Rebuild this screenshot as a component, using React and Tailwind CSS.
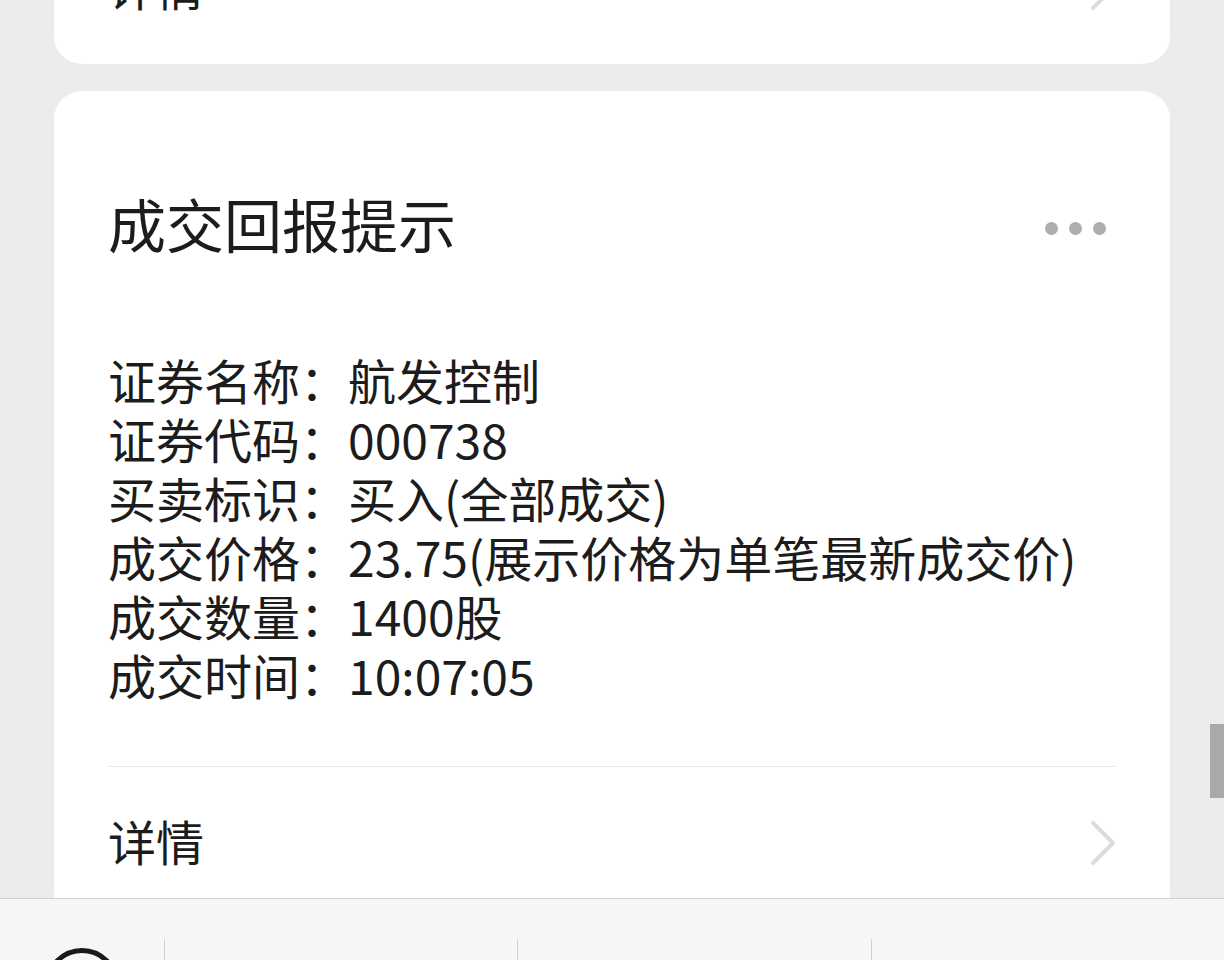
import React from 'react';

const rows = [
    ['证券名称：', '航发控制'],
    ['证券代码：', '000738'],
    ['买卖标识：', '买入(全部成交)'],
    ['成交价格：', '23.75(展示价格为单笔最新成交价)'],
    ['成交数量：', '1400股'],
    ['成交时间：', '10:07:05'],
];

const Chevron = () => (
    <svg width="26" height="46" viewBox="0 0 26 46" fill="none">
        <path d="M3 3 L23 23 L3 43" stroke="#dcdcdc" strokeWidth="4" strokeLinecap="round" strokeLinejoin="round" />
    </svg>
);

const DetailRow = ({ textClass = '' }) => (
    <div className="flex items-center justify-between h-[152px]">
        <span className={`text-[48px] leading-none text-[#1c1c1c] ${textClass}`}>详情</span>
        <Chevron />
    </div>
);

const App = () => {
    return (
        <div
            className="relative flex flex-col h-[960px] w-[1224px] overflow-hidden bg-[#ececec]"
            style={{ fontFamily: '"Noto Sans CJK SC", "Noto Sans", sans-serif' }}
        >
            {/* 消息列表 */}
            <div className="flex-1 min-h-0 overflow-hidden">
                {/* 上一条卡片（只露出底部） */}
                <div className="mx-[54px] mt-[-88px] bg-white rounded-[28px] px-[54px]">
                    <DetailRow textClass="-translate-y-[3px]" />
                </div>

                {/* 成交回报卡片 */}
                <div className="mx-[54px] mt-[27px] bg-white rounded-[28px] px-[54px] pt-[92px]">
                    <div className="flex items-center justify-between h-[80px]">
                        <h2 className="text-[58px] leading-none font-normal text-[#1c1c1c]">成交回报提示</h2>
                        <div className="flex items-center gap-[11px] mr-[10px] translate-y-[5px]">
                            <span className="w-[13px] h-[13px] rounded-full bg-[#adadad]" />
                            <span className="w-[13px] h-[13px] rounded-full bg-[#adadad]" />
                            <span className="w-[13px] h-[13px] rounded-full bg-[#adadad]" />
                        </div>
                    </div>

                    <div className="mt-[87px] pb-[62px] border-b border-[#e6e6e6]">
                        {rows.map(([label, value]) => (
                            <div key={label} className="flex text-[48px] leading-[59px] text-[#1c1c1c] whitespace-nowrap">
                                <span>{label}</span>
                                <span>{value}</span>
                            </div>
                        ))}
                    </div>

                    <DetailRow textClass="-translate-y-[3px]" />
                </div>
            </div>

            {/* 滚动条 */}
            <div className="absolute right-0 top-[724px] w-[14px] h-[74px] bg-[#a9a9a9]" />

            {/* 底部栏 */}
            <div className="flex-none h-[62px] bg-[#f6f6f6] border-t border-[#cfcfcf] flex items-start">
                <div className="w-[164px] h-full flex justify-center">
                    <div className="mt-[49px] w-[74px] h-[74px] shrink-0 rounded-full border-[5px] border-[#1a1a1a]" />
                </div>
                <div className="w-[353px] h-full border-l border-[#d2d2d2] mt-[40px]" />
                <div className="w-[354px] h-full border-l border-[#d2d2d2] mt-[40px]" />
                <div className="flex-1 h-full border-l border-[#d2d2d2] mt-[40px]" />
            </div>
        </div>
    );
};

export default App;
